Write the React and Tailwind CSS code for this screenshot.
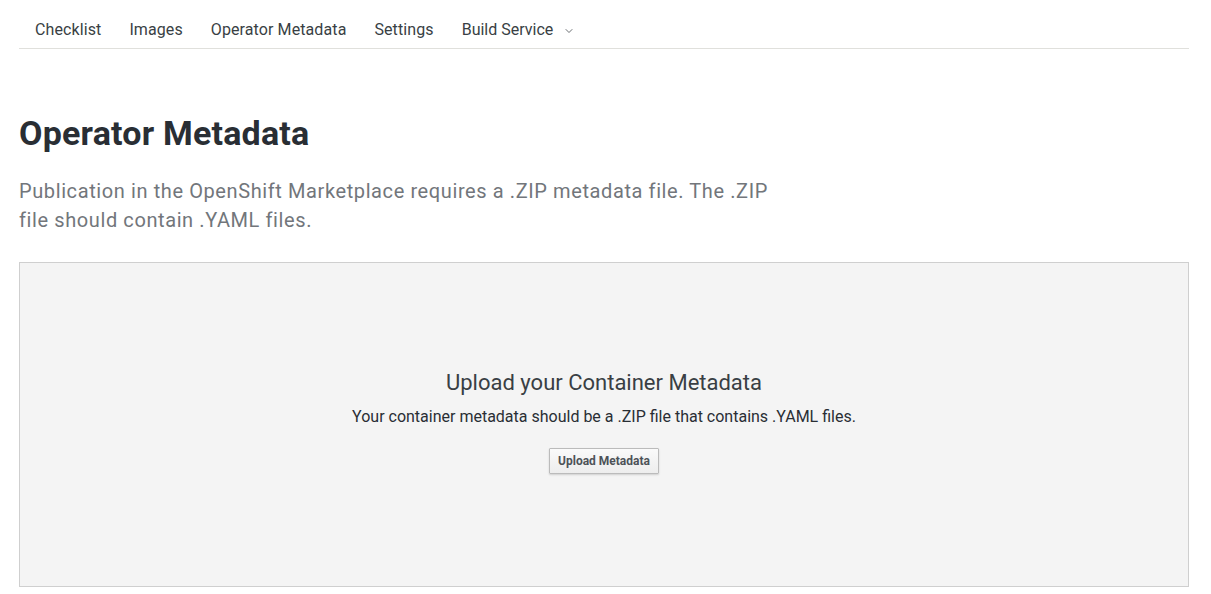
import { ChevronDown } from "lucide-react";

const tabs = ["Checklist", "Images", "Operator Metadata", "Settings"];

export default function App() {
  return (
    <div className="min-h-screen bg-white pl-[19px] pr-[22px] font-['Roboto',sans-serif] text-[#151515]">
      {/* Tabs */}
      <nav className="flex items-end h-[49px] border-b border-[#e0e0dc] pl-[2px]">
        {tabs.map((t) => (
          <span key={t} className="px-[14px] pb-[6px] text-[16px] text-[#393f44] tracking-[0.1px]">
            {t}
          </span>
        ))}
        <span className="flex items-center gap-[10px] px-[14px] pb-[6px] text-[16px] text-[#393f44]">
          Build Service
          <ChevronDown className="w-[12px] h-[12px] mt-[2px]" strokeWidth={1.5} />
        </span>
      </nav>

      {/* Header */}
      <h1 className="mt-[62px] text-[34px] leading-[44px] font-bold text-[#292e34] tracking-[0.2px]">
        Operator Metadata
      </h1>
      <p className="mt-[22px] max-w-[760px] text-[20px] leading-[29px] tracking-[0.6px] text-[#72767b]">
        Publication in the OpenShift Marketplace requires a .ZIP metadata file. The .ZIP file should contain .YAML files.
      </p>

      {/* Upload area */}
      <div className="mt-[27px] h-[325px] border border-[#cfcfcf] bg-[#f4f4f4] flex flex-col items-center justify-center pb-[8px]">
        <h2 className="text-[22px] leading-[30px] text-[#393f44]">Upload your Container Metadata</h2>
        <p className="mt-[8px] text-[16px] leading-[22px] text-[#292e34]">
          Your container metadata should be a .ZIP file that contains .YAML files.
        </p>
        <button className="mt-[20px] h-[26px] px-[8px] border border-[#bbbbbb] rounded-[1px] bg-gradient-to-b from-[#fafafa] to-[#ededed] shadow-[0_1px_2px_rgba(0,0,0,0.15)] text-[12px] font-bold text-[#4d5258]">
          Upload Metadata
        </button>
      </div>
    </div>
  );
}
